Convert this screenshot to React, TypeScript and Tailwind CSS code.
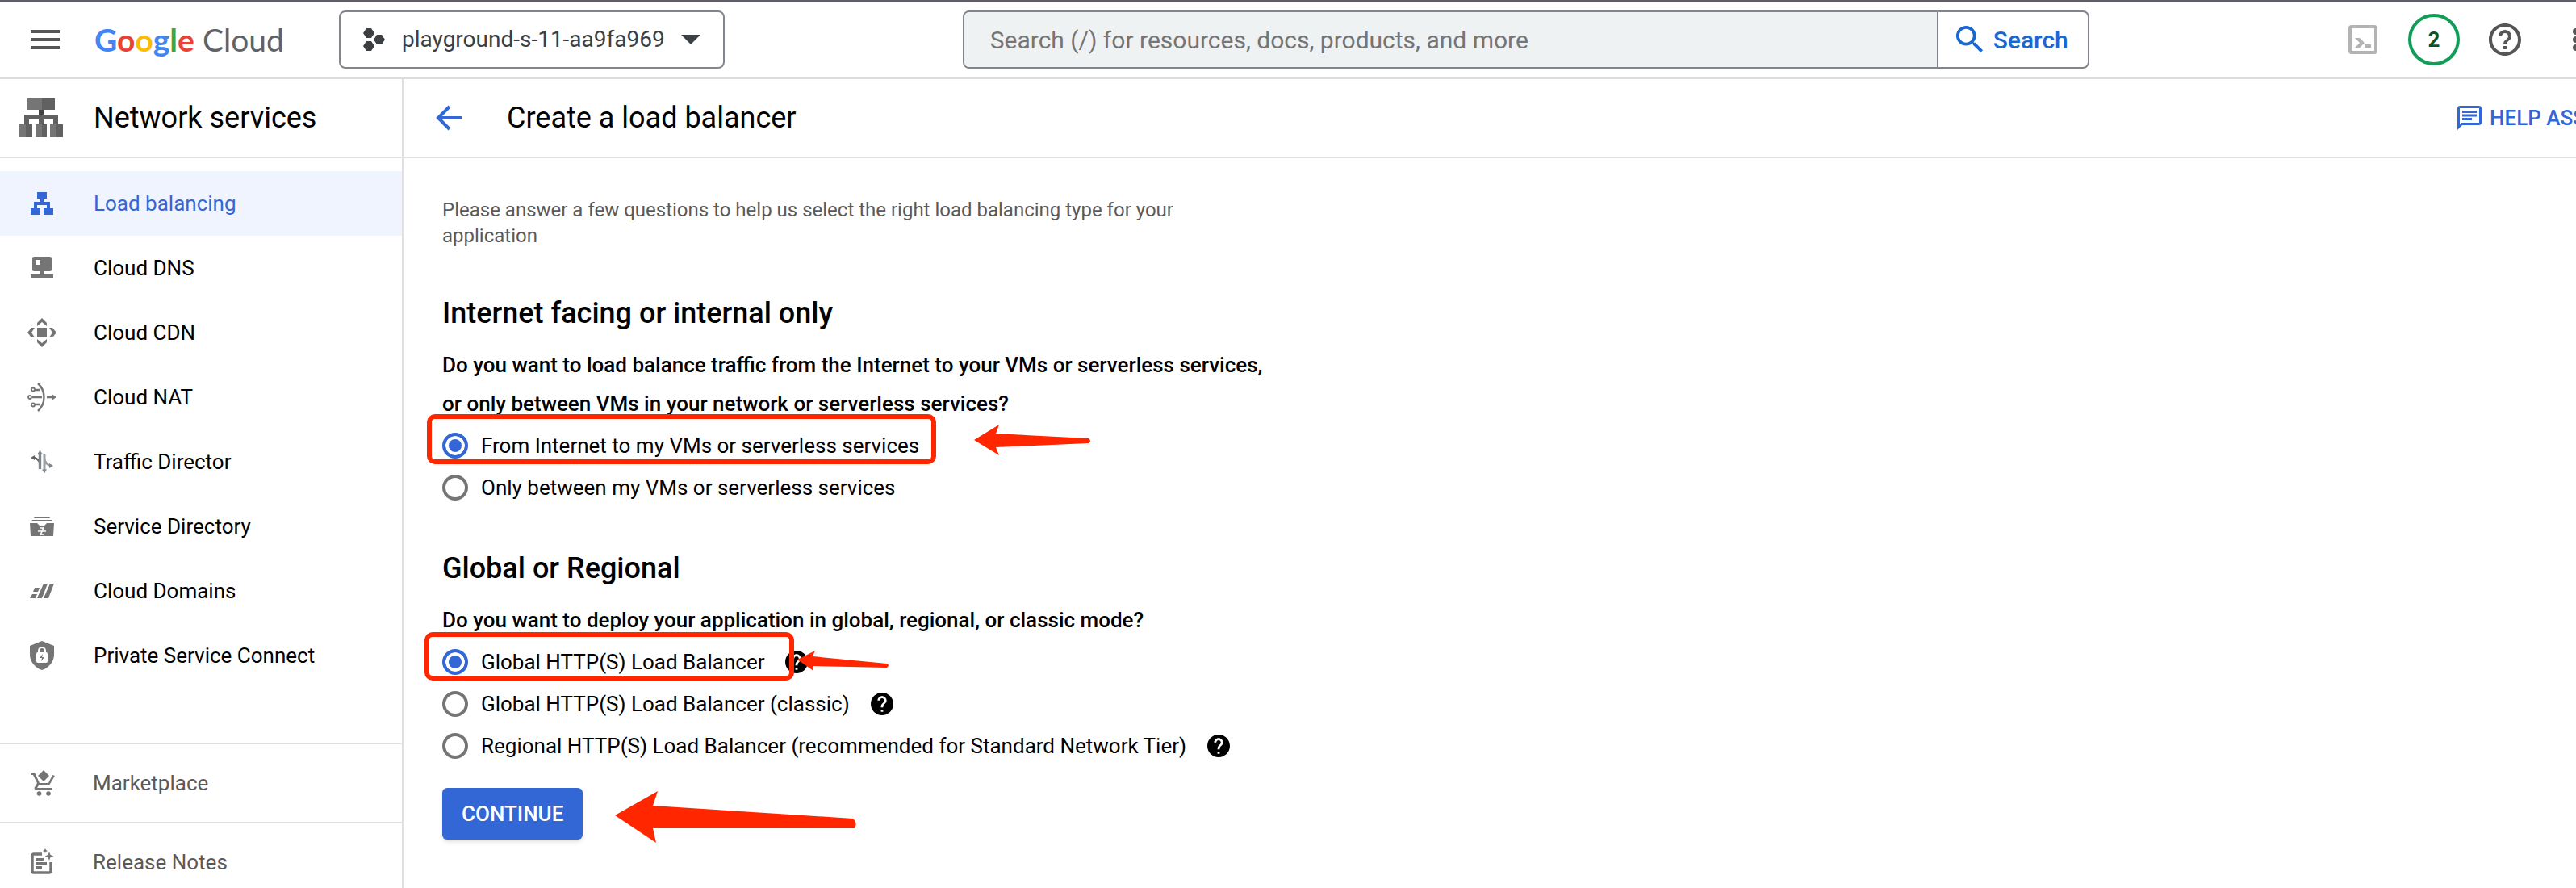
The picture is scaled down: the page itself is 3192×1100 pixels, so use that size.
import { useState, type ReactNode } from "react";

const Icon = ({ size = "size-9", box = "0 0 24 24", children }: { size?: string; box?: string; children: ReactNode }) => (
  <svg viewBox={box} className={`${size} shrink-0`} fill="currentColor" aria-hidden="true">
    {children}
  </svg>
);

const NAV: { label: string; icon: ReactNode }[] = [
  {
    label: "Load balancing",
    icon: <path d="M12 4h12v8h-4v4h8v8h4v8H20v-8h4v-4H12v4h4v8H4v-8h4v-8h8v-4h-4z" />,
  },
  {
    label: "Cloud DNS",
    icon: (
      <path
        fillRule="evenodd"
        d="M8 4h20a2 2 0 0 1 2 2v14a2 2 0 0 1-2 2H20v4h12v4H4v-4h12v-4H8a2 2 0 0 1-2-2V6a2 2 0 0 1 2-2zm2 4v6h6V8z"
      />
    ),
  },
  {
    label: "Cloud CDN",
    icon: (
      <path d="M12 12h12v12H12zM18 0l6 6v4l-6-5-6 5V6zM18 36l6-6v-4l-6 5-6-5v4zM0 18l5-6h4l-4 6 4 6H5zM36 18l-5-6h-4l4 6-4 6h4z" />
    ),
  },
  {
    label: "Cloud NAT",
    icon: (
      <>
        <path d="M13 1c10 9 10 25 0 34M6 18h12M9 9h6M9 27h6M24 18h6" fill="none" stroke="currentColor" strokeWidth="2.4" />
        <circle cx="3" cy="18" r="2" fill="none" stroke="currentColor" strokeWidth="1.8" />
        <circle cx="7" cy="8.5" r="2" fill="none" stroke="currentColor" strokeWidth="1.8" />
        <circle cx="7" cy="27.5" r="2" fill="none" stroke="currentColor" strokeWidth="1.8" />
        <path d="M30 14l6 4-6 4z" />
      </>
    ),
  },
  {
    label: "Traffic Director",
    icon: (
      <>
        <path d="M7 13c4 0 6 2 8 5" fill="none" stroke="#5f6368" strokeWidth="2.4" />
        <path d="M4 13l5-3v6z" fill="#5f6368" />
        <path d="M15.500 7v20" fill="none" stroke="#80868b" strokeWidth="3.4" />
        <path d="M15.500 3.500l3 5h-6z" fill="#80868b" />
        <path d="M21 9v20M21 15c1 4 4 7 8 8" fill="none" stroke="#9aa0a6" strokeWidth="3" />
        <path d="M32 23l-5 3v-6zM21 32.500l3-5h-6z" fill="#80868b" />
      </>
    ),
  },
  {
    label: "Service Directory",
    icon: (
      <>
        <path d="M9 6h18l1 2H8zM6 10h24l1 2H5zM3 14h9l3 3h6l3-3h9l-1 16H4z" />
        <path d="M15 20h6M13 24h10M15 28h6M20 19l-4 10" stroke="#fff" strokeWidth="1.6" fill="none" />
      </>
    ),
  },
  {
    label: "Cloud Domains",
    icon: <path d="M20 9h5l-7 18h-6zM28 9h5l-7 18h-6zM9 14h6l-2 5H7zM6 22h6l-2 5H3z" />,
  },
  {
    label: "Private Service Connect",
    icon: (
      <>
        <path d="M18 0l15 6v11c0 8-6 16-15 19C9 33 3 25 3 17V6z" />
        <rect x="11" y="14" width="14" height="13" rx="2" fill="#fff" />
        <path d="M14 14v-2a4 4 0 0 1 8 0v2" fill="none" stroke="#fff" strokeWidth="2" />
        <path d="M19 16l-4 5h3l-1 4 4-5h-3z" />
      </>
    ),
  },
];

function HelpDot({ label }: { label: string }) {
  return (
    <button type="button" aria-label={label} className="ml-[26px] size-7 text-black">
      <Icon size="size-7" box="2 2 20 20">
        <path d="M12 2C6.480 2 2 6.480 2 12s4.480 10 10 10 10-4.480 10-10S17.520 2 12 2zm1 17h-2v-2h2v2zm2.070-7.750l-.9.920C13.450 12.900 13 13.500 13 15h-2v-.5c0-1.100.450-2.100 1.170-2.830l1.240-1.260c.370-.360.590-.860.590-1.410 0-1.100-.9-2-2-2s-2 .9-2 2H8c0-2.210 1.790-4 4-4s4 1.790 4 4c0 .880-.360 1.680-.930 2.250z" />
      </Icon>
    </button>
  );
}

function Option({ name, label, checked, onPick, help, mark }: {
  name: string; label: string; checked: boolean; onPick: () => void; help?: boolean; mark?: ReactNode;
}) {
  return (
    <div className="relative flex h-13 items-center">
      <label className="flex items-center gap-4 text-[26px] leading-8">
        <input
          type="radio"
          name={name}
          checked={checked}
          onChange={onPick}
          className="size-8 shrink-0 appearance-none rounded-full border-4 border-[#757575] bg-white checked:border-[#3367d6] checked:bg-[#3367d6] checked:shadow-[inset_0_0_0_4px_#fff]"
        />
        {label}
      </label>
      {help && <HelpDot label={`About ${label}`} />}
      {mark}
    </div>
  );
}

export default function App() {
  const [facing, setFacing] = useState(0);
  const [mode, setMode] = useState(0);
  return (
    <div className="flex h-screen flex-col overflow-hidden border-t-2 border-[#5f5e66] bg-white font-[Roboto,sans-serif] text-black">
      <header className="flex h-24 shrink-0 items-center border-b-2 border-[#dadce0]">
        <button type="button" aria-label="Main menu" className="ml-[38px] flex w-9 flex-col gap-[6px]">
          <span className="h-1 bg-[#565656]" />
          <span className="h-1 bg-[#565656]" />
          <span className="h-1 bg-[#565656]" />
        </button>
        <a href="#" className="ml-[43px] flex w-[303px] gap-[10px] font-[Lato,sans-serif] text-[39px] leading-12">
          <span className="font-bold">
            <span className="text-[#4285f4]">G</span>
            <span className="text-[#ea4335]">o</span>
            <span className="text-[#fbbc04]">o</span>
            <span className="text-[#4285f4]">g</span>
            <span className="text-[#34a853]">l</span>
            <span className="text-[#ea4335]">e</span>
          </span>
          <span className="text-[#5f6368]">Cloud</span>
        </a>
        <button type="button" className="flex h-18 shrink-0 items-center rounded-lg border-2 border-[#80868b] px-7 text-[28px] text-[#3c4043]">
          <Icon size="size-7" box="0 0 28 28">
            <path d="M4 0h6l4 6-4 6H4L0 6zM4 16h6l4 6-4 6H4l-4-6zM17 8h6l4 6-4 6h-6l-4-6z" />
          </Icon>
          <span className="ml-5">playground-s-11-aa9fa969</span>
          <Icon size="ml-5 h-3 w-6" box="0 0 24 12"><path d="M0 0h24L12 12z" /></Icon>
        </button>
        <form className="ml-[295px] flex h-18 w-[1396px] rounded-lg border-2 border-[#80868b]" onSubmit={(e) => e.preventDefault()}>
          <input
            type="search"
            aria-label="Search"
            placeholder="Search (/) for resources, docs, products, and more"
            className="min-w-0 flex-1 rounded-l-md bg-[#eef2f3] pl-8 text-[30px] text-[#3c4043] outline-none placeholder:text-[#757575]"
          />
          <button type="submit" className="flex items-center gap-3 border-l-2 border-[#80868b] pr-6 pl-[22px] text-[30px] font-medium text-[#1967d2]">
            <Icon size="size-[34px]" box="3 3 18 18">
              <path d="M15.500 14h-.790l-.280-.270A6.471 6.471 0 0 0 16 9.500 6.500 6.500 0 1 0 9.500 16c1.610 0 3.090-.590 4.230-1.570l.270.280v.790l5 4.990L20.490 19l-4.990-5zm-6 0C7.010 14 5 11.990 5 9.500S7.010 5 9.500 5 14 7.010 14 9.500 11.990 14 9.500 14z" />
            </Icon>
            Search
          </button>
        </form>
        <div className="ml-auto flex shrink-0 items-center text-[#565656]">
          <button type="button" aria-label="Activate Cloud Shell" className="text-[#b3b3b3]">
            <Icon size="size-9" box="0 0 36 36">
              <rect x="2" y="2" width="32" height="32" rx="2" fill="none" stroke="currentColor" strokeWidth="4" />
              <path d="M8 16h6l6 6-6 6H8l6-6zM20 24h8v4h-8z" />
            </Icon>
          </button>
          <button type="button" aria-label="Notifications" className="ml-[38px] size-16 rounded-full border-4 border-[#0f9d58] text-[26px] font-bold text-[#0d5225]">2</button>
          <button type="button" aria-label="Help" className="ml-9">
            <Icon size="size-10" box="2 2 20 20">
              <path d="M11 18h2v-2h-2v2zm1-16C6.480 2 2 6.480 2 12s4.480 10 10 10 10-4.480 10-10S17.520 2 12 2zm0 18c-4.410 0-8-3.590-8-8s3.590-8 8-8 8 3.590 8 8-3.590 8-8 8zm0-14c-2.210 0-4 1.790-4 4h2c0-1.100.9-2 2-2s2 .9 2 2c0 2-3 1.750-3 5h2c0-2.250 3-2.500 3-5 0-2.210-1.790-4-4-4z" />
            </Icon>
          </button>
          <button type="button" aria-label="More options" className="ml-16 w-1 overflow-hidden">
            <Icon size="h-7 w-2" box="0 0 8 28">
              <circle cx="4" cy="4" r="4" /><circle cx="4" cy="14" r="4" /><circle cx="4" cy="24" r="4" />
            </Icon>
          </button>
        </div>
      </header>

      <div className="flex min-h-0 flex-1">
        <aside className="flex w-[500px] shrink-0 flex-col border-r-2 border-[#e0e0e0]">
          <div className="flex h-[98px] shrink-0 items-center border-b-2 border-[#e0e0e0] pl-6">
            <Icon size="h-12 w-[54px]" box="0 0 54 48">
              <path fill="#757575" d="M10 0h18v14H10zM0 32h8v16H0zM20 32h8v16h-8zM38 32h8v16h-8z" />
              <path fill="#616161" d="M28 0h16v14H28zM8 32h8v16H8zM28 32h6v16h-6zM46 32h8v16h-8zM6 20h42v12h-6v-6H30v6h-6v-6H12v6H6z" />
              <path fill="#424242" d="M24 14h6v6h-6z" />
            </Icon>
            <h2 className="ml-[38px] text-[36px]">Network services</h2>
          </div>
          <nav className="flex flex-col py-4 text-[26px]">
            {NAV.map((n, i) => (
              <a key={n.label} href="#" className={`flex h-20 items-center gap-[46px] pl-[34px] ${i === 0 ? "bg-[#eff4fe] text-[#3367d6]" : ""}`}>
                <span className={i === 0 ? "text-[#3367d6]" : "text-[#757575]"}>
                  <Icon box="0 0 36 36">{n.icon}</Icon>
                </span>
                {n.label}
              </a>
            ))}
          </nav>
          <div className="mt-[52px] flex flex-col text-[26px] text-[#5a5a5a]">
            <a href="#" className="flex h-[98px] items-center gap-[45px] border-t-2 border-[#e0e0e0] pl-[34px]">
              <span className="text-[#757575]">
                <Icon box="0 0 36 36">
                  <path d="M20 2l7 7-7 7-7-7zM4 5h5l6 13h11l5-10 3 1-6 10c-1 2-2 2-3 2H14l-2 3h19v3H12c-3 0-4-2-3-4l3-5L7 8H4z" />
                  <circle cx="14.5" cy="31" r="2.8" /><circle cx="26" cy="31" r="2.8" />
                </Icon>
              </span>
              Marketplace
            </a>
            <a href="#" className="flex h-[98px] items-center gap-[45px] border-t-2 border-[#e0e0e0] pl-[34px]">
              <span className="text-[#757575]">
                <Icon box="0 0 36 36">
                  <path d="M18 8H8a2 2 0 0 0-2 2v19a2 2 0 0 0 2 2h19a2 2 0 0 0 2-2V18" fill="none" stroke="currentColor" strokeWidth="3.5" />
                  <path d="M10 13h10v3H10zM10 18h14v3H10zM10 23h8v3h-8zM27 5l1.500 4 4 1.500-4 1.500-1.500 4-1.500-4-4-1.500 4-1.500zM22 1l1 2 2 1-2 1-1 2-1-2-2-1 2-1z" />
                </Icon>
              </span>
              Release Notes
            </a>
          </div>
        </aside>

        <main className="min-w-0 flex-1">
          <div className="flex h-[98px] items-center border-b-2 border-[#e0e0e0] pl-10">
            <button type="button" aria-label="Back" className="text-[#3367d6]">
              <Icon size="size-8" box="0 0 32 32">
                <path d="M32 16H4M17 2L3 16l14 14" fill="none" stroke="currentColor" strokeWidth="4" />
              </Icon>
            </button>
            <h1 className="ml-14 text-[36px]">Create a load balancer</h1>
            <button type="button" className="ml-auto flex w-[147px] items-center gap-[10px] overflow-hidden text-[26px] font-medium whitespace-nowrap text-[#3367d6]">
              <Icon size="size-[30px]" box="2 2 20 20">
                <path d="M4 4h16v12H5.170L4 17.170V4m0-2c-1.100 0-1.990.9-1.990 2L2 22l4-4h14c1.100 0 2-.9 2-2V4c0-1.100-.9-2-2-2H4zm2 10h8v2H6v-2zm0-3h12v2H6V9zm0-3h12v2H6V6z" />
              </Icon>
              HELP ASSISTANT
            </button>
          </div>

          <div className="max-w-[1120px] px-12 pt-12">
            <p className="max-w-[920px] text-[24px] leading-8 text-[#5a5a5a]">
              Please answer a few questions to help us select the right load balancing type for your application
            </p>
            <section className="mt-14">
              <h2 className="text-[36px] leading-12 font-medium">Internet facing or internal only</h2>
              <p className="mt-4 mb-0.5 text-[26px] leading-12 font-medium">
                Do you want to load balance traffic from the Internet to your VMs or serverless services, or only between VMs in your network or serverless services?
              </p>
              <Option
                name="facing" label="From Internet to my VMs or serverless services" checked={facing === 0} onPick={() => setFacing(0)}
                mark={
                  <>
                    <span className="pointer-events-none absolute top-[-13px] left-[-19px] h-[62px] w-[631px] rounded-[10px] border-6 border-[#ff2600]" />
                    <svg viewBox="0 0 146 38" className="pointer-events-none absolute top-0 left-[659px] h-[38px] w-[146px]" fill="#ff2600">
                      <path d="M0 19L31 0l-4 11 115 6q4 3 0 6L27 28l4 10z" />
                    </svg>
                  </>
                }
              />
              <Option name="facing" label="Only between my VMs or serverless services" checked={facing === 1} onPick={() => setFacing(1)} />
            </section>
            <section className="mt-[50px]">
              <h2 className="text-[36px] leading-12 font-medium">Global or Regional</h2>
              <p className="mt-4 mb-0.5 text-[26px] leading-12 font-medium">
                Do you want to deploy your application in global, regional, or classic mode?
              </p>
              <Option
                name="mode" help label="Global HTTP(S) Load Balancer" checked={mode === 0} onPick={() => setMode(0)}
                mark={
                  <>
                    <span className="pointer-events-none absolute top-[-11px] left-[-22px] h-[60px] w-[458px] rounded-[10px] border-6 border-[#ff2600]" />
                    <svg viewBox="0 0 114 26" className="pointer-events-none absolute top-3 left-[440px] h-[26px] w-[114px]" fill="#ff2600">
                      <path d="M0 11L22 0l-3 7 92 9q4 2 0 5L19 19l1 6z" />
                    </svg>
                  </>
                }
              />
              <Option name="mode" help label="Global HTTP(S) Load Balancer (classic)" checked={mode === 1} onPick={() => setMode(1)} />
              <Option name="mode" help label="Regional HTTP(S) Load Balancer (recommended for Standard Network Tier)" checked={mode === 2} onPick={() => setMode(2)} />
            </section>
            <div className="relative mt-[26px] flex">
              <button type="button" className="h-16 rounded-md bg-[#3367d6] px-6 text-[26px] font-medium text-white shadow-md">CONTINUE</button>
              <svg viewBox="0 0 300 64" className="pointer-events-none absolute top-1 left-[214px] h-16 w-[300px]" fill="#ff2600">
                <path d="M0 30L53 0l-6 18 248 16q6 6 2 12H47l4 18z" />
              </svg>
            </div>
          </div>
        </main>
      </div>
    </div>
  );
}
